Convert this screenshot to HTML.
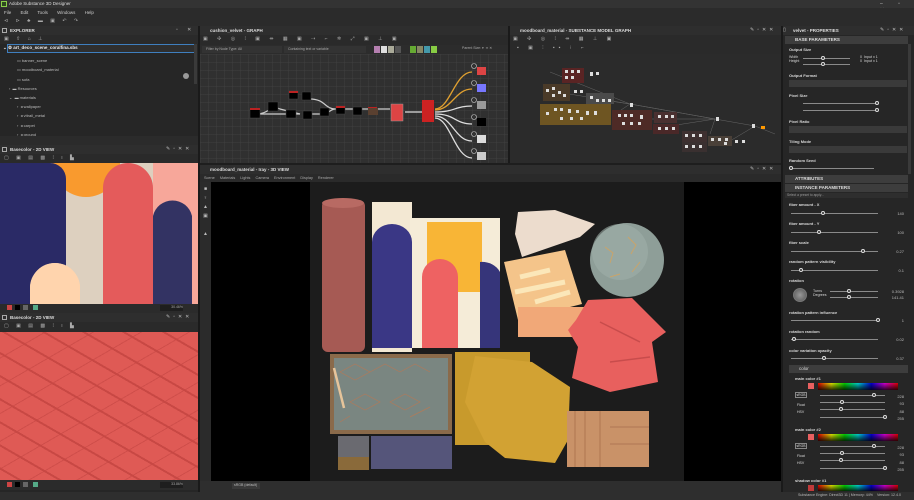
<!DOCTYPE html>
<html><head><meta charset="utf-8"><style>
*{margin:0;padding:0;box-sizing:border-box}
body{width:914px;height:500px;overflow:hidden;background:#262626;font-family:"Liberation Sans",sans-serif;font-size:4.5px;color:#c8c8c8;position:relative}
.a{position:absolute}
.hd{position:absolute;background:#2e2e2e;color:#ddd;font-weight:bold;font-size:4.5px;line-height:9px;padding-left:10px;white-space:nowrap}
.tb{position:absolute;background:#2a2a2a}
.sl{position:absolute;height:1px;background:#8a8a8a}
.kn{position:absolute;width:4px;height:4px;border:1px solid #ddd;border-radius:50%;background:#2a2a2a;top:-2px}
.lb{position:absolute;font-size:4px;color:#d8d8d8;font-weight:bold;white-space:nowrap}
.v{position:absolute;font-size:4px;color:#bbb;text-align:right;width:20px}
.dd{position:absolute;height:7px;background:#3a3a3a;left:789px;width:118px}
.sec{position:absolute;left:785px;width:123px;height:8px;background:#3d3d3d;color:#ddd;font-weight:bold;font-size:4.5px;line-height:8px;padding-left:10px}
.hue{position:absolute;left:818px;width:80px;height:7px;background:linear-gradient(to right,#d00,#dd0,#0c0,#0cc,#00c,#c0c,#d00)}
.hue:after{content:"";position:absolute;inset:0;background:linear-gradient(rgba(0,0,0,0),rgba(0,0,0,.8))}
</style></head><body>
<div class="a" style="left:0;top:0;width:914px;height:8px;background:#333"></div>
<div class="a" style="left:1px;top:1px;width:6px;height:6px;background:#2d4a1f;border:1px solid #8ad04a"></div>
<div class="a" style="left:9px;top:1px;color:#ddd;font-size:4.5px">Adobe Substance 3D Designer</div>
<div class="a" style="left:880px;top:1px;color:#ccc;font-size:5px;letter-spacing:7px">– ▫ ✕</div>
<div class="a" style="left:0;top:8px;width:914px;height:18px;background:#2b2b2b"></div>
<div class="a" style="left:4px;top:10px;font-size:4.5px;color:#ccc;word-spacing:8px">File Edit Tools Windows Help</div>
<div class="a" style="left:4px;top:18px;font-size:5px;color:#aaa;letter-spacing:3px">⊲ ⊳ ♣ ▬ ▣ ↶ ↷</div>

<div class="a" style="left:0;top:26px;width:198px;height:119px;background:#262626"></div>
<div class="hd" style="left:0;top:26px;width:198px;height:9px">EXPLORER</div>
<div class="a" style="left:2px;top:28px;width:5px;height:5px;border:1px solid #aaa"></div>
<div class="a" style="left:176px;top:27px;color:#bbb;font-size:5px;letter-spacing:4px">▫ ✕ ✕</div>
<div class="tb" style="left:0;top:35px;width:198px;height:9px"></div>
<div class="a" style="left:4px;top:36px;color:#aaa;font-size:5px;letter-spacing:3px">▣ ⇧ ⌂ ⊥</div>
<div class="a" style="left:7px;top:44px;width:188px;height:9px;border:1px solid #3f7fbf;background:#2f2f2f"></div>
<div class="a" style="left:3px;top:45px;font-size:4.5px;color:#eee;font-weight:bold">⌄ ⚙ art_deco_scene_coralfina.sbs</div>
<div class="a" style="left:17px;top:56px;font-size:4px;color:#bbb;line-height:9.3px">▭ banner_scene<br>▭ moodboard_material<br>▭ sofa</div>
<div class="a" style="left:183px;top:73px;width:6px;height:6px;border-radius:50%;background:#999"></div>
<div class="a" style="left:9px;top:84px;font-size:4px;color:#bbb;line-height:9.3px">›&nbsp; ▬ Resources<br>⌄&nbsp; ▬ materials</div>
<div class="a" style="left:17px;top:102px;font-size:4px;color:#bbb;line-height:9.3px">›&nbsp; ◂ wallpaper<br>›&nbsp; ◂ vitrail_metal<br>›&nbsp; ◂ carpet<br>›&nbsp; ◂ ground</div>
<div class="a" style="left:194px;top:44px;width:3px;height:40px;background:#3a3a3a"></div>
<div class="tb" style="left:0;top:136px;width:198px;height:9px;background:#2b2b2b"></div>

<div class="hd" style="left:0;top:145px;width:198px;height:9px">Basecolor - 2D VIEW</div>
<div class="a" style="left:2px;top:147px;width:5px;height:5px;border:1px solid #aaa"></div>
<div class="a" style="left:166px;top:146px;color:#bbb;font-size:5px;letter-spacing:3px">✎▫✕✕</div>
<div class="tb" style="left:0;top:154px;width:198px;height:9px"></div>
<div class="a" style="left:4px;top:155px;color:#aaa;font-size:5px;letter-spacing:3px">▢ ▣ ▤ ▩ ⁞ ı ▙</div>
<svg class="a" style="left:0;top:163px" width="198" height="141" viewBox="0 0 198 141">
<rect width="198" height="141" fill="#ddd0bf"/>
<path d="M52 0 H120 A34 34 0 0 1 52 0Z" fill="#f99a2e"/>
<path d="M0 0 H50 A16 16 0 0 1 66 16 V141 H0Z" fill="#2a2a66"/>
<path d="M30 141 V125 A25 25 0 0 1 80 125 V141Z" fill="#ffd4ad"/>
<rect x="153" y="0" width="45" height="141" fill="#f7a79a"/>
<path d="M103 141 V25 A25 25 0 0 1 153 25 V141Z" fill="#e45b5b"/>
<path d="M153 141 V53 A20 20 0 0 1 192 53 V141Z" fill="#333363"/>
</svg>
<div class="a" style="left:30px;top:263px;width:50px;height:41px;background:#ffd4ad;border-radius:25px 25px 0 0"></div>
<div class="tb" style="left:0;top:304px;width:198px;height:9px;background:#2b2b2b"></div>
<div class="a" style="left:7px;top:305px;width:5px;height:5px;background:#c44"></div>
<div class="a" style="left:15px;top:305px;width:5px;height:5px;background:#000"></div>
<div class="a" style="left:23px;top:305px;width:5px;height:5px;background:#666"></div>
<div class="a" style="left:33px;top:305px;width:5px;height:5px;background:#5a8"></div>
<div class="a" style="left:160px;top:305px;width:23px;height:6px;background:#1e1e1e;font-size:3.5px;color:#aaa;text-align:right">30.46%</div>

<div class="hd" style="left:0;top:313px;width:198px;height:9px">Basecolor - 2D VIEW</div>
<div class="a" style="left:2px;top:315px;width:5px;height:5px;border:1px solid #aaa"></div>
<div class="a" style="left:166px;top:314px;color:#bbb;font-size:5px;letter-spacing:3px">✎▫✕✕</div>
<div class="tb" style="left:0;top:322px;width:198px;height:10px"></div>
<div class="a" style="left:4px;top:323px;color:#aaa;font-size:5px;letter-spacing:3px">▢ ▣ ▤ ▩ ⁞ ı ▙</div>
<div class="a" style="left:0;top:332px;width:198px;height:148px;background:#df5a55;background-image:repeating-linear-gradient(30deg,rgba(0,0,0,0) 0 9px,#c84844 9px 11px,rgba(0,0,0,0) 11px 20px),repeating-linear-gradient(-30deg,rgba(0,0,0,0) 0 12px,#cf4e4a 12px 13px,rgba(0,0,0,0) 13px 24px)"></div>
<div class="tb" style="left:0;top:480px;width:198px;height:10px;background:#2b2b2b"></div>
<div class="a" style="left:7px;top:482px;width:5px;height:5px;background:#c44"></div>
<div class="a" style="left:15px;top:482px;width:5px;height:5px;background:#000"></div>
<div class="a" style="left:23px;top:482px;width:5px;height:5px;background:#666"></div>
<div class="a" style="left:33px;top:482px;width:5px;height:5px;background:#5a8"></div>
<div class="a" style="left:160px;top:482px;width:23px;height:6px;background:#1e1e1e;font-size:3.5px;color:#aaa;text-align:right">33.86%</div>
<div class="a" style="left:198px;top:26px;width:2px;height:474px;background:#1a1a1a"></div>

<div class="hd" style="left:200px;top:26px;width:308px;height:9px">cushion_velvet - GRAPH</div>
<div class="tb" style="left:200px;top:35px;width:308px;height:10px"></div>
<div class="a" style="left:203px;top:36px;color:#aaa;font-size:5px;letter-spacing:4px">▣ ✣ ◎ ⁞ ▣ ⇹ ▦ ▣ ⇢ ⌐ ✲ ⤢ ▣ ⊥ ▣</div>
<div class="a" style="left:200px;top:45px;width:308px;height:9px;background:#2c2c2c"></div>
<div class="a" style="left:202px;top:46px;width:80px;height:7px;background:#333;font-size:3.5px;color:#aaa;line-height:7px;padding-left:4px">Filter by Node Type: All</div>
<div class="a" style="left:284px;top:46px;width:82px;height:7px;background:#333;font-size:3.5px;color:#aaa;line-height:7px;padding-left:4px">Containing text or variable</div>
<div class="a" style="left:374px;top:46px;width:6px;height:7px;background:#b57fb0"></div>
<div class="a" style="left:381px;top:46px;width:6px;height:7px;background:#ddd"></div>
<div class="a" style="left:388px;top:46px;width:6px;height:7px;background:#aa9"></div>
<div class="a" style="left:395px;top:46px;width:6px;height:7px;background:#555"></div>
<div class="a" style="left:410px;top:46px;width:6px;height:7px;background:#6a3"></div>
<div class="a" style="left:417px;top:46px;width:6px;height:7px;background:#886"></div>
<div class="a" style="left:424px;top:46px;width:6px;height:7px;background:#49a"></div>
<div class="a" style="left:431px;top:46px;width:6px;height:7px;background:#8c4"></div>
<div class="a" style="left:462px;top:46px;font-size:3.5px;color:#aaa">Parent Size: ▾ &nbsp;▪▪ ✕</div>
<div class="a" style="left:200px;top:54px;width:308px;height:109px;background:#303030;background-image:linear-gradient(rgba(70,70,70,.35) 1px,transparent 1px),linear-gradient(90deg,rgba(70,70,70,.35) 1px,transparent 1px);background-size:8px 8px"></div>
<svg class="a" style="left:200px;top:54px" width="308" height="109">
<g fill="none" stroke="#ccc" stroke-width="1.2">
<path d="M56 60 C70 60 70 50 80 55 L100 60"/><path d="M56 60 H100"/><path d="M110 60 H120 C130 60 130 55 135 55 H190"/>
<path d="M110 45 C125 45 125 55 135 55"/>
</g>
<g fill="none" stroke-width="1.3">
<path d="M235 55 C250 55 255 18 272 18" stroke="#e0a030"/><path d="M235 56 C252 56 255 35 272 35" stroke="#e0a030"/>
<path d="M235 58 C255 58 255 52 272 52" stroke="#ddd"/><path d="M235 60 C255 60 255 70 272 70" stroke="#ddd"/>
<path d="M235 62 C252 62 255 87 272 87" stroke="#ddd"/><path d="M235 64 C250 64 255 104 272 104" stroke="#ddd"/>
<path d="M205 58 H222" stroke="#ddd"/>
</g>
<g fill="#000" stroke="#444" stroke-width=".5">
<rect x="50" y="55" width="10" height="9"/><rect x="68" y="48" width="10" height="9"/><rect x="89" y="37" width="9" height="8"/><rect x="102" y="38" width="9" height="8"/>
<rect x="86" y="56" width="10" height="8"/><rect x="103" y="57" width="9" height="8"/><rect x="120" y="54" width="9" height="8"/><rect x="136" y="52" width="9" height="8"/><rect x="153" y="53" width="9" height="8"/>
</g>
<g fill="#b22"><rect x="50" y="54" width="10" height="2"/><rect x="89" y="37" width="9" height="2"/><rect x="136" y="52" width="9" height="2"/><rect x="168" y="53" width="9" height="2"/></g>
<rect x="168" y="54" width="10" height="7" fill="#5a4030"/>
<rect x="191" y="50" width="12" height="17" fill="#d44" stroke="#999" stroke-width=".5"/>
<rect x="222" y="46" width="12" height="22" fill="#c22"/>
<g stroke="#ccc" stroke-width=".6" fill="#333"><circle cx="274" cy="12" r="2.5"/><circle cx="274" cy="29" r="2.5"/><circle cx="274" cy="46" r="2.5"/><circle cx="274" cy="63" r="2.5"/><circle cx="274" cy="80" r="2.5"/><circle cx="274" cy="97" r="2.5"/></g>
<rect x="277" y="13" width="9" height="8" fill="#d44"/><rect x="277" y="30" width="9" height="8" fill="#77f"/><rect x="277" y="47" width="9" height="8" fill="#999"/><rect x="277" y="64" width="9" height="8" fill="#000"/><rect x="277" y="81" width="9" height="8" fill="#ddd"/><rect x="277" y="98" width="9" height="8" fill="#ccc"/>
</svg>
<div class="a" style="left:508px;top:26px;width:2px;height:139px;background:#1a1a1a"></div>

<div class="hd" style="left:510px;top:26px;width:271px;height:9px">moodboard_material - SUBSTANCE MODEL GRAPH</div>
<div class="a" style="left:750px;top:27px;color:#bbb;font-size:5px;letter-spacing:3px">✎▫✕✕</div>
<div class="tb" style="left:510px;top:35px;width:271px;height:19px"></div>
<div class="a" style="left:513px;top:36px;color:#aaa;font-size:5px;letter-spacing:4px">▣ ✣ ◎ ⁞ ⇹ ▦ ⊥ ▣</div>
<div class="a" style="left:517px;top:45px;color:#aaa;font-size:5px;letter-spacing:4px">▪ ▣ ⫶ ▪▪ ⁝ ⌐</div>
<div class="a" style="left:510px;top:54px;width:271px;height:109px;background:#2b2b2b"></div>
<svg class="a" style="left:510px;top:54px" width="271" height="109">
<g stroke="#666" stroke-width=".5" fill="none"><path d="M40 18 L120 50 L205 65 L245 72"/><path d="M35 36 L120 50"/><path d="M80 44 L120 50"/><path d="M105 60 L120 50 L205 65"/><path d="M140 65 L205 65"/><path d="M160 72 L205 65"/><path d="M200 80 L205 65"/><path d="M215 90 L245 72"/><path d="M265 80 L245 72"/></g>
<rect x="52" y="14" width="22" height="15" fill="#5a2424"/>
<rect x="33" y="30" width="27" height="17" fill="#4a3a28"/>
<rect x="76" y="39" width="28" height="11" fill="#4a4a4a"/>
<rect x="30" y="50" width="71" height="21" fill="#6e5522"/>
<rect x="102" y="56" width="40" height="20" fill="#4e2a26"/>
<rect x="144" y="58" width="23" height="11" fill="#4a3030"/>
<rect x="143" y="70" width="26" height="10" fill="#4a2828"/>
<rect x="172" y="77" width="25" height="11" fill="#3e3030"/>
<rect x="172" y="88" width="25" height="10" fill="#3a3030"/>
<rect x="198" y="82" width="24" height="10" fill="#4a4038"/>
<g fill="#ddd"><rect x="55" y="16" width="3" height="3"/><rect x="61" y="16" width="3" height="3"/><rect x="67" y="16" width="3" height="3"/><rect x="55" y="22" width="3" height="3"/><rect x="61" y="22" width="3" height="3"/><rect x="80" y="18" width="3" height="4"/><rect x="86" y="18" width="3" height="3"/>
<rect x="36" y="35" width="3" height="3"/><rect x="42" y="33" width="3" height="3"/><rect x="48" y="37" width="3" height="3"/><rect x="42" y="40" width="3" height="3"/><rect x="53" y="40" width="3" height="3"/><rect x="64" y="36" width="3" height="3"/><rect x="70" y="36" width="3" height="3"/>
<rect x="80" y="42" width="3" height="3"/><rect x="86" y="45" width="3" height="3"/><rect x="92" y="45" width="3" height="3"/><rect x="98" y="45" width="3" height="3"/>
<rect x="36" y="58" width="3" height="3"/><rect x="44" y="54" width="3" height="3"/><rect x="50" y="54" width="3" height="3"/><rect x="58" y="55" width="3" height="4"/><rect x="66" y="56" width="3" height="3"/><rect x="76" y="57" width="3" height="4"/><rect x="84" y="57" width="3" height="4"/><rect x="50" y="63" width="3" height="3"/><rect x="60" y="63" width="3" height="3"/><rect x="70" y="63" width="3" height="3"/>
<rect x="108" y="60" width="3" height="3"/><rect x="114" y="60" width="3" height="3"/><rect x="120" y="60" width="3" height="3"/><rect x="130" y="61" width="3" height="4"/><rect x="112" y="68" width="3" height="3"/><rect x="120" y="68" width="3" height="3"/><rect x="128" y="68" width="3" height="3"/>
<rect x="148" y="61" width="3" height="3"/><rect x="155" y="61" width="3" height="3"/><rect x="161" y="61" width="3" height="3"/><rect x="148" y="73" width="3" height="3"/><rect x="155" y="73" width="3" height="3"/><rect x="162" y="73" width="3" height="3"/>
<rect x="120" y="49" width="3" height="4"/><rect x="206" y="63" width="3" height="4"/><rect x="175" y="80" width="3" height="3"/><rect x="182" y="80" width="3" height="3"/><rect x="189" y="80" width="3" height="3"/><rect x="175" y="91" width="3" height="3"/><rect x="182" y="91" width="3" height="3"/><rect x="189" y="91" width="3" height="3"/>
<rect x="201" y="84" width="3" height="3"/><rect x="208" y="84" width="3" height="3"/><rect x="215" y="84" width="3" height="3"/><rect x="214" y="88" width="3" height="3"/><rect x="225" y="86" width="3" height="3"/><rect x="232" y="86" width="3" height="3"/><rect x="242" y="70" width="3" height="4"/></g>
<rect x="251" y="72" width="4" height="3" fill="#f90"/>
</svg>
<div class="a" style="left:781px;top:26px;width:2px;height:466px;background:#1a1a1a"></div>

<div class="hd" style="left:200px;top:165px;width:581px;height:9px">moodboard_material - Iray - 3D VIEW</div>
<div class="a" style="left:200px;top:163px;width:581px;height:2px;background:#1e1e1e"></div>
<div class="a" style="left:750px;top:166px;color:#bbb;font-size:5px;letter-spacing:3px">✎▫✕✕</div>
<div class="a" style="left:200px;top:174px;width:581px;height:8px;background:#2a2a2a;font-size:3.8px;color:#aaa;line-height:8px;padding-left:4px;word-spacing:4px">Scene Materials Lights Camera Environment Display Renderer</div>
<div class="a" style="left:200px;top:182px;width:11px;height:299px;background:#2b2b2b"></div>
<div class="a" style="left:202px;top:185px;color:#bbb;font-size:5px;line-height:9px;width:7px;text-align:center">■<br>♀<br>▲<br>▣<br><br>▲</div>
<div class="a" style="left:211px;top:182px;width:570px;height:299px;background:#000"></div>
<div class="a" style="left:310px;top:182px;width:374px;height:299px;background:#1c1c1c"></div>
<svg class="a" style="left:310px;top:182px" width="374" height="299">
<rect x="12" y="18" width="43" height="152" rx="6" fill="#a65a54"/><ellipse cx="33" cy="21" rx="21" ry="5" fill="#b86a63"/>
<rect x="62" y="20" width="40" height="150" fill="#f3e8d3"/>
<rect x="100" y="36" width="90" height="130" fill="#f5ecd8"/>
<rect x="117" y="40" width="55" height="70" fill="#f8b536"/>
<path d="M148 166 V95 A18 18 0 0 0 112 95 V166Z" fill="#ee6262"/>
<path d="M190 166 V90 A20 18 0 0 0 170 80 V166Z" fill="#36357a"/>
<path d="M62 166 V60 A20 18 0 0 1 102 60 V166Z" fill="#3a3785"/>
<path d="M208 30 L245 28 L285 42 L270 55 L212 75 L205 52Z" fill="#ecdccd"/>
<path d="M194 80 L255 68 L272 122 L208 138Z" fill="#f4c48a"/>
<path d="M205 110 L255 100 M210 95 L240 88 M225 120 L260 110" stroke="#fbe7b9" stroke-width="5"/>
<rect x="208" y="125" width="67" height="30" fill="#f1a878"/>
<circle cx="317" cy="78" r="37" fill="#8e9e98"/><circle cx="310" cy="70" r="28" fill="#9fafa8" opacity=".6"/>
<path d="M295 65 l8 6 l-3 10 M318 55 l8 8 l-5 9 M330 80 l-8 10 M300 95 l10 -3" stroke="#c9a46a" stroke-width="1" fill="none"/>
<path d="M278 118 L322 116 L356 150 L342 160 L348 200 L300 210 L262 196 L268 165 L258 148 L266 138Z" fill="#e8605e"/>
<path d="M290 140 L330 160 M300 180 L340 175" stroke="#c84c4c" stroke-width="1.5"/>
<rect x="20" y="172" width="122" height="80" fill="#8a6a4a"/><rect x="24" y="176" width="114" height="72" fill="#7a8681"/>
<path d="M30 190 l15 -8 l15 8 l-15 8z M60 190 l15 -8 l15 8 M90 190 l15 -8 l15 8 M40 220 l15 -8 l15 8 l-15 8z M80 220 l15 -8 l15 8 l-15 8z M30 240 l10 -6 M100 235 l20 -10" stroke="#b07a5a" stroke-width=".7" fill="none"/>
<path d="M24 186 L34 226" stroke="#e6c49a" stroke-width="2.5"/>
<rect x="145" y="170" width="75" height="93" fill="#c89a2c"/>
<path d="M165 174 L222 180 L260 205 L258 258 L245 281 L195 276 L175 260 L155 220Z" fill="#d2a233"/>
<rect x="257" y="229" width="82" height="56" fill="#c99268"/>
<path d="M265 229 V285 M275 229 V285 M300 245 H339 M300 262 H339 M290 229 V285" stroke="#a86f4c" stroke-width=".8"/>
<rect x="28" y="254" width="31" height="34" fill="#6a6a70"/><rect x="28" y="275" width="31" height="13" fill="#8a6a3a"/>
<rect x="61" y="254" width="81" height="33" fill="#55557a"/>
</svg>
<div class="a" style="left:200px;top:481px;width:581px;height:11px;background:#2e2e2e"></div>
<div class="a" style="left:232px;top:483px;width:28px;height:6px;background:#3a3a3a;font-size:3.5px;color:#bbb;padding-left:2px">sRGB (default)</div>

<div class="a" style="left:783px;top:26px;width:131px;height:466px;background:#262626"></div>
<div class="hd" style="left:783px;top:26px;width:131px;height:9px">velvet - PROPERTIES</div>
<div class="a" style="left:783px;top:27px;color:#bbb;font-size:5px">▯</div>
<div class="a" style="left:880px;top:27px;color:#bbb;font-size:5px;letter-spacing:3px">✎▫✕✕</div>
<div class="sec" style="top:36px">BASE PARAMETERS</div>
<div class="a" style="left:908px;top:44px;width:3px;height:130px;background:#3a3a3a"></div>
<div class="lb" style="left:789px;top:47px">Output Size</div>
<div class="lb" style="left:789px;top:55px;font-weight:normal;font-size:3.6px">Width<br>Height</div>
<div class="sl" style="left:803px;top:58px;width:47px"><div class="kn" style="left:18px"></div></div>
<div class="sl" style="left:803px;top:64px;width:47px"><div class="kn" style="left:18px"></div></div>
<div class="lb" style="left:860px;top:55px;font-weight:normal;font-size:3.6px">0 &nbsp;Input x 1<br>0 &nbsp;Input x 1</div>
<div class="lb" style="left:789px;top:73px">Output Format</div>
<div class="dd" style="top:80px"></div>
<div class="lb" style="left:789px;top:93px">Pixel Size</div>
<div class="sl" style="left:803px;top:103px;width:75px"><div class="kn" style="left:72px"></div></div>
<div class="sl" style="left:803px;top:110px;width:75px"><div class="kn" style="left:72px"></div></div>
<div class="lb" style="left:789px;top:119px">Pixel Ratio</div>
<div class="dd" style="top:126px"></div>
<div class="lb" style="left:789px;top:139px">Tiling Mode</div>
<div class="dd" style="top:146px"></div>
<div class="lb" style="left:789px;top:158px">Random Seed</div>
<div class="sl" style="left:789px;top:168px;width:85px"><div class="kn" style="left:0"></div></div>
<div class="sec" style="top:175px">ATTRIBUTES</div>
<div class="sec" style="top:184px">INSTANCE PARAMETERS</div>
<div class="a" style="left:785px;top:193px;width:123px;height:5px;background:#2e2e2e;font-size:3.3px;color:#999;padding-left:2px">Select a preset to apply...</div>
<div class="lb" style="left:789px;top:202px">fiber amount - X</div><div class="sl" style="left:791px;top:213px;width:87px"><div class="kn" style="left:30px"></div></div><div class="v" style="left:884px;top:211px">140</div>
<div class="lb" style="left:789px;top:221px">fiber amount - Y</div><div class="sl" style="left:791px;top:232px;width:87px"><div class="kn" style="left:26px"></div></div><div class="v" style="left:884px;top:230px">100</div>
<div class="lb" style="left:789px;top:240px">fiber scale</div><div class="sl" style="left:791px;top:251px;width:87px"><div class="kn" style="left:70px"></div></div><div class="v" style="left:884px;top:249px">0.27</div>
<div class="lb" style="left:789px;top:259px">random pattern visibility</div><div class="sl" style="left:791px;top:270px;width:87px"><div class="kn" style="left:8px"></div></div><div class="v" style="left:884px;top:268px">0.1</div>
<div class="lb" style="left:789px;top:278px">rotation</div>
<div class="a" style="left:793px;top:288px;width:14px;height:14px;border-radius:50%;background:radial-gradient(#999,#555);border:1px solid #777"></div>
<div class="lb" style="left:813px;top:289px;font-weight:normal;font-size:3.6px">Turns<br>Degrees</div>
<div class="sl" style="left:830px;top:291px;width:48px"><div class="kn" style="left:17px"></div></div>
<div class="sl" style="left:830px;top:297px;width:48px"><div class="kn" style="left:17px"></div></div>
<div class="v" style="left:884px;top:289px;line-height:6px">0.3928<br>141.41</div>
<div class="lb" style="left:789px;top:310px">rotation pattern influence</div><div class="sl" style="left:791px;top:320px;width:87px"><div class="kn" style="left:85px"></div></div><div class="v" style="left:884px;top:318px">1</div>
<div class="lb" style="left:789px;top:329px">rotation random</div><div class="sl" style="left:791px;top:339px;width:87px"><div class="kn" style="left:1px"></div></div><div class="v" style="left:884px;top:337px">0.02</div>
<div class="lb" style="left:789px;top:348px">color variation opacity</div><div class="sl" style="left:791px;top:358px;width:87px"><div class="kn" style="left:31px"></div></div><div class="v" style="left:884px;top:356px">0.37</div>
<div class="sec" style="top:365px;left:789px;width:119px;font-weight:normal">color</div>
<div class="lb" style="left:795px;top:376px">main color #1</div>
<div class="a" style="left:808px;top:383px;width:6px;height:6px;background:#e86060"></div><div class="hue" style="top:383px"></div>
<div class="a" style="left:795px;top:392px;width:12px;height:6px;border:1px solid #888;font-size:3.4px;color:#ddd;text-align:center">sRGB</div>
<div class="lb" style="left:797px;top:402px;font-weight:normal;font-size:3.5px;line-height:7px">Float<br>HSV</div>
<div class="sl" style="left:820px;top:395px;width:65px"><div class="kn" style="left:52px"></div></div>
<div class="sl" style="left:820px;top:402px;width:65px"><div class="kn" style="left:20px"></div></div>
<div class="sl" style="left:820px;top:409px;width:65px"><div class="kn" style="left:19px"></div></div>
<div class="sl" style="left:820px;top:417px;width:65px"><div class="kn" style="left:63px"></div></div>
<div class="v" style="left:884px;top:393px;line-height:7.3px">228<br>93<br>88<br>255</div>
<div class="lb" style="left:795px;top:427px">main color #2</div>
<div class="a" style="left:808px;top:434px;width:6px;height:6px;background:#e86060"></div><div class="hue" style="top:434px"></div>
<div class="a" style="left:795px;top:443px;width:12px;height:6px;border:1px solid #888;font-size:3.4px;color:#ddd;text-align:center">sRGB</div>
<div class="lb" style="left:797px;top:453px;font-weight:normal;font-size:3.5px;line-height:7px">Float<br>HSV</div>
<div class="sl" style="left:820px;top:446px;width:65px"><div class="kn" style="left:52px"></div></div>
<div class="sl" style="left:820px;top:453px;width:65px"><div class="kn" style="left:20px"></div></div>
<div class="sl" style="left:820px;top:460px;width:65px"><div class="kn" style="left:19px"></div></div>
<div class="sl" style="left:820px;top:468px;width:65px"><div class="kn" style="left:63px"></div></div>
<div class="v" style="left:884px;top:444px;line-height:7.3px">228<br>93<br>88<br>255</div>
<div class="lb" style="left:795px;top:478px">shadow color #1</div>
<div class="a" style="left:808px;top:485px;width:6px;height:6px;background:#c03a3a"></div><div class="hue" style="top:485px;height:6px"></div>
<div class="a" style="left:0;top:492px;width:914px;height:8px;background:#2e2e2e"></div>
<div class="a" style="left:798px;top:493px;font-size:3.6px;color:#bbb;white-space:nowrap">Substance Engine: Direct3D 11 | Memory: 44% &nbsp;&nbsp; Version: 12.4.0</div>
</body></html>
